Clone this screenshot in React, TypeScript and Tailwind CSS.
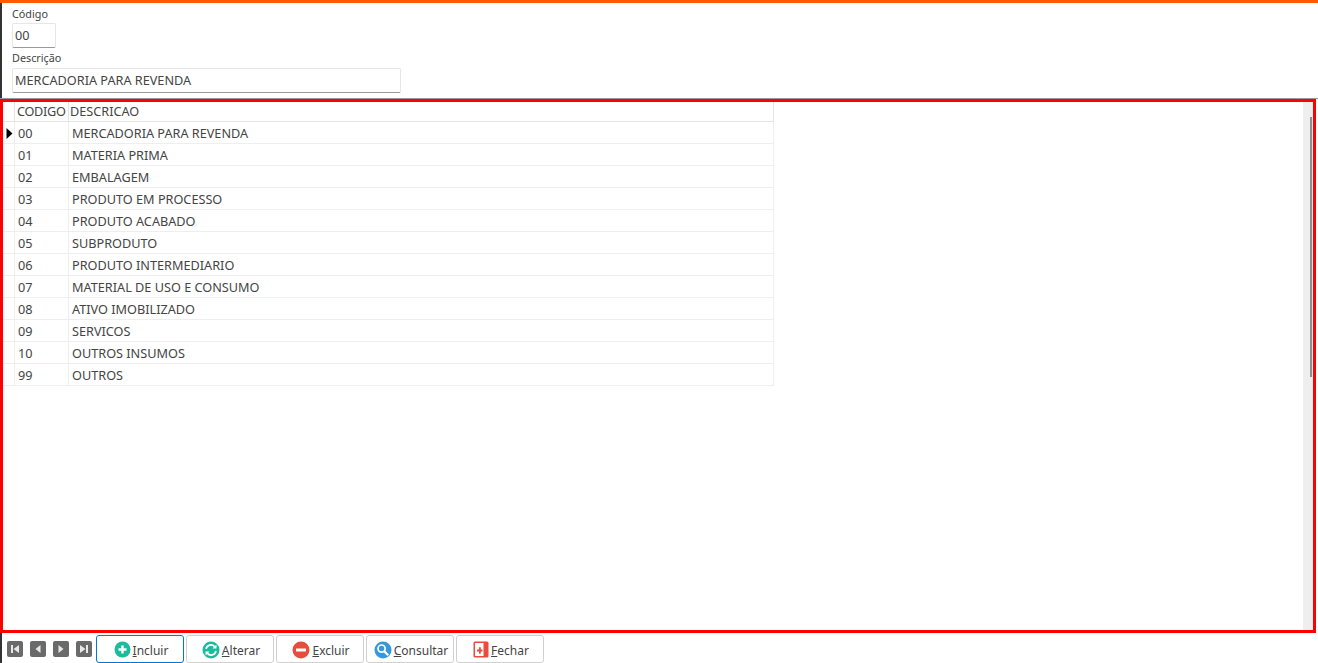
const rows = [
  ['00', 'MERCADORIA PARA REVENDA'],
  ['01', 'MATERIA PRIMA'],
  ['02', 'EMBALAGEM'],
  ['03', 'PRODUTO EM PROCESSO'],
  ['04', 'PRODUTO ACABADO'],
  ['05', 'SUBPRODUTO'],
  ['06', 'PRODUTO INTERMEDIARIO'],
  ['07', 'MATERIAL DE USO E CONSUMO'],
  ['08', 'ATIVO IMOBILIZADO'],
  ['09', 'SERVICOS'],
  ['10', 'OUTROS INSUMOS'],
  ['99', 'OUTROS'],
];

function NavIcon({ kind }: { kind: 'first' | 'prev' | 'next' | 'last' }) {
  return (
    <div className="w-[16px] h-[16px] rounded-[2px] bg-[#6a6a6a] flex items-center justify-center">
      <svg width="10" height="10" viewBox="0 0 10 10" fill="#e8e8e8">
        {kind === 'first' && <path d="M1 1h2v8H1zM9 1v8L3.5 5z" />}
        {kind === 'prev' && <path d="M7.5 1v8L2.5 5z" />}
        {kind === 'next' && <path d="M2.5 1v8l5-4z" />}
        {kind === 'last' && <path d="M7 1h2v8H7zM1 1v8l5.5-4z" />}
      </svg>
    </div>
  );
}

function ActionIcon({ kind }: { kind: string }) {
  if (kind === 'incluir') {
    return (
      <svg width="17" height="17" viewBox="0 0 17 17">
        <circle cx="8.5" cy="8.5" r="8" fill="#1abc9c" />
        <path d="M7.3 4.5h2.4v2.8h2.8v2.4H9.7v2.8H7.3V9.7H4.5V7.3h2.8z" fill="#fff" />
      </svg>
    );
  }
  if (kind === 'alterar') {
    return (
      <svg width="18" height="18" viewBox="0 0 18 18">
        <circle cx="9" cy="9" r="8.5" fill="#1abc9c" />
        <path d="M4 8a5 5 0 0 1 8.6-2.4" fill="none" stroke="#fff" strokeWidth="1.7" />
        <path d="M14.5 3.5v4h-4z" fill="#fff" />
        <path d="M14 10a5 5 0 0 1-8.6 2.4" fill="none" stroke="#fff" strokeWidth="1.7" />
        <path d="M3.5 14.5v-4h4z" fill="#fff" />
      </svg>
    );
  }
  if (kind === 'excluir') {
    return (
      <svg width="18" height="18" viewBox="0 0 18 18">
        <circle cx="9" cy="9" r="8.5" fill="#e74c3c" />
        <rect x="4" y="7.5" width="10" height="3" rx="0.5" fill="#fff" />
      </svg>
    );
  }
  if (kind === 'consultar') {
    return (
      <svg width="18" height="18" viewBox="0 0 19 19">
        <circle cx="9.5" cy="9.5" r="9" fill="#3498db" />
        <circle cx="8" cy="8" r="3.8" fill="none" stroke="#fff" strokeWidth="1.8" />
        <path d="M10.8 10.8l4.2 4.2" stroke="#fff" strokeWidth="2.4" />
      </svg>
    );
  }
  return (
    <svg width="16" height="17" viewBox="0 0 16 17">
      <rect x="0.5" y="0.5" width="15" height="16" rx="1.5" fill="#e74c3c" />
      <rect x="2" y="2" width="8.5" height="13" fill="#fff" />
      <path d="M4 8.5h2v-2.2h1.8v2.2H9.5v2H7.8v2.2H6v-2.2H4z" fill="#e74c3c" />
    </svg>
  );
}

function ActionButton({
  kind,
  first,
  rest,
  active,
}: {
  kind: string;
  first: string;
  rest: string;
  active?: boolean;
}) {
  return (
    <button
      className={`h-[28px] w-[88px] pl-[2px] pt-[2px] flex items-center justify-center rounded-[3px] border bg-white text-[12px] text-[#444] ${
        active ? 'border-[#0078d7]' : 'border-[#d0d0d0]'
      }`}
    >
      <ActionIcon kind={kind} />
      <span className="ml-[2px] mt-[2px]">
        <span className="underline">{first}</span>
        {rest}
      </span>
    </button>
  );
}

export default function App() {
  return (
    <div className="w-[1318px] h-[663px] bg-white flex flex-col overflow-hidden font-['Noto_Sans','Open_Sans',sans-serif] text-[12.7px] text-[#444]">
      <div className="h-[3px] bg-[#ff5a00]" />

      {/* Form */}
      <div className="h-[95px] border-l-2 border-[#333] pl-[10px] text-[10.8px]">
        <div className="h-[20px] pt-[3px] leading-[16px]">Código</div>
        <div className="w-[44px] h-[25px] border border-[#e6e6e6] border-b-[#999] rounded-[2px] pl-[2px] text-[12.7px] leading-[22px]">
          00
        </div>
        <div className="h-[20px] pt-[2px] leading-[16px]">Descrição</div>
        <div className="w-[389px] h-[25px] border border-[#e6e6e6] border-b-[#999] rounded-[2px] pl-[2px] text-[12.7px] leading-[22px]">
          MERCADORIA PARA REVENDA
        </div>
      </div>
      <div className="h-px bg-[#999]" />

      {/* Grid */}
      <div className="w-[1316px] h-[534px] border-[3px] border-[#ff0000] flex">
        <div className="flex-1">
          <div className="flex h-[20px] w-[771px] border-b border-[#e4e4e4] leading-[18px]">
            <div className="w-[12px] border-r border-[#e4e4e4]" />
            <div className="w-[54px] pl-[2px] border-r border-[#e4e4e4] tracking-[-0.3px]">CODIGO</div>
            <div className="flex-1 pl-[1px] border-r border-[#e4e4e4]">DESCRICAO</div>
          </div>
          {rows.map(([code, desc], i) => (
            <div key={code} className="flex h-[22px] w-[771px] border-b border-[#eeeeee] leading-[22px]">
              <div className="w-[12px] border-r border-[#eeeeee] flex items-center justify-end pr-[1px]">
                {i === 0 && (
                  <svg width="7" height="11" viewBox="0 0 7 11" className="mt-px">
                    <path d="M0.5 0l6 5.5-6 5.5z" fill="#000" />
                  </svg>
                )}
              </div>
              <div className="w-[54px] pl-[3px] border-r border-[#eeeeee]">{code}</div>
              <div className="flex-1 pl-[3px] border-r border-[#eeeeee]">{desc}</div>
            </div>
          ))}
        </div>
        <div className="w-[10px] bg-[#eeeeee] pl-[7px] pt-[15px]">
          <div className="w-[2px] h-[260px] bg-[#8f8f8f]" />
        </div>
      </div>

      {/* Footer */}
      <div className="flex-1 flex items-center border-l-2 border-[#333] pl-[5px] pt-px">
        <div className="flex gap-[7px] w-[89px]">
          <NavIcon kind="first" />
          <NavIcon kind="prev" />
          <NavIcon kind="next" />
          <NavIcon kind="last" />
        </div>
        <div className="flex gap-[2px]">
          <ActionButton kind="incluir" first="I" rest="ncluir" active />
          <ActionButton kind="alterar" first="A" rest="lterar" />
          <ActionButton kind="excluir" first="E" rest="xcluir" />
          <ActionButton kind="consultar" first="C" rest="onsultar" />
          <ActionButton kind="fechar" first="F" rest="echar" />
        </div>
      </div>
    </div>
  );
}
